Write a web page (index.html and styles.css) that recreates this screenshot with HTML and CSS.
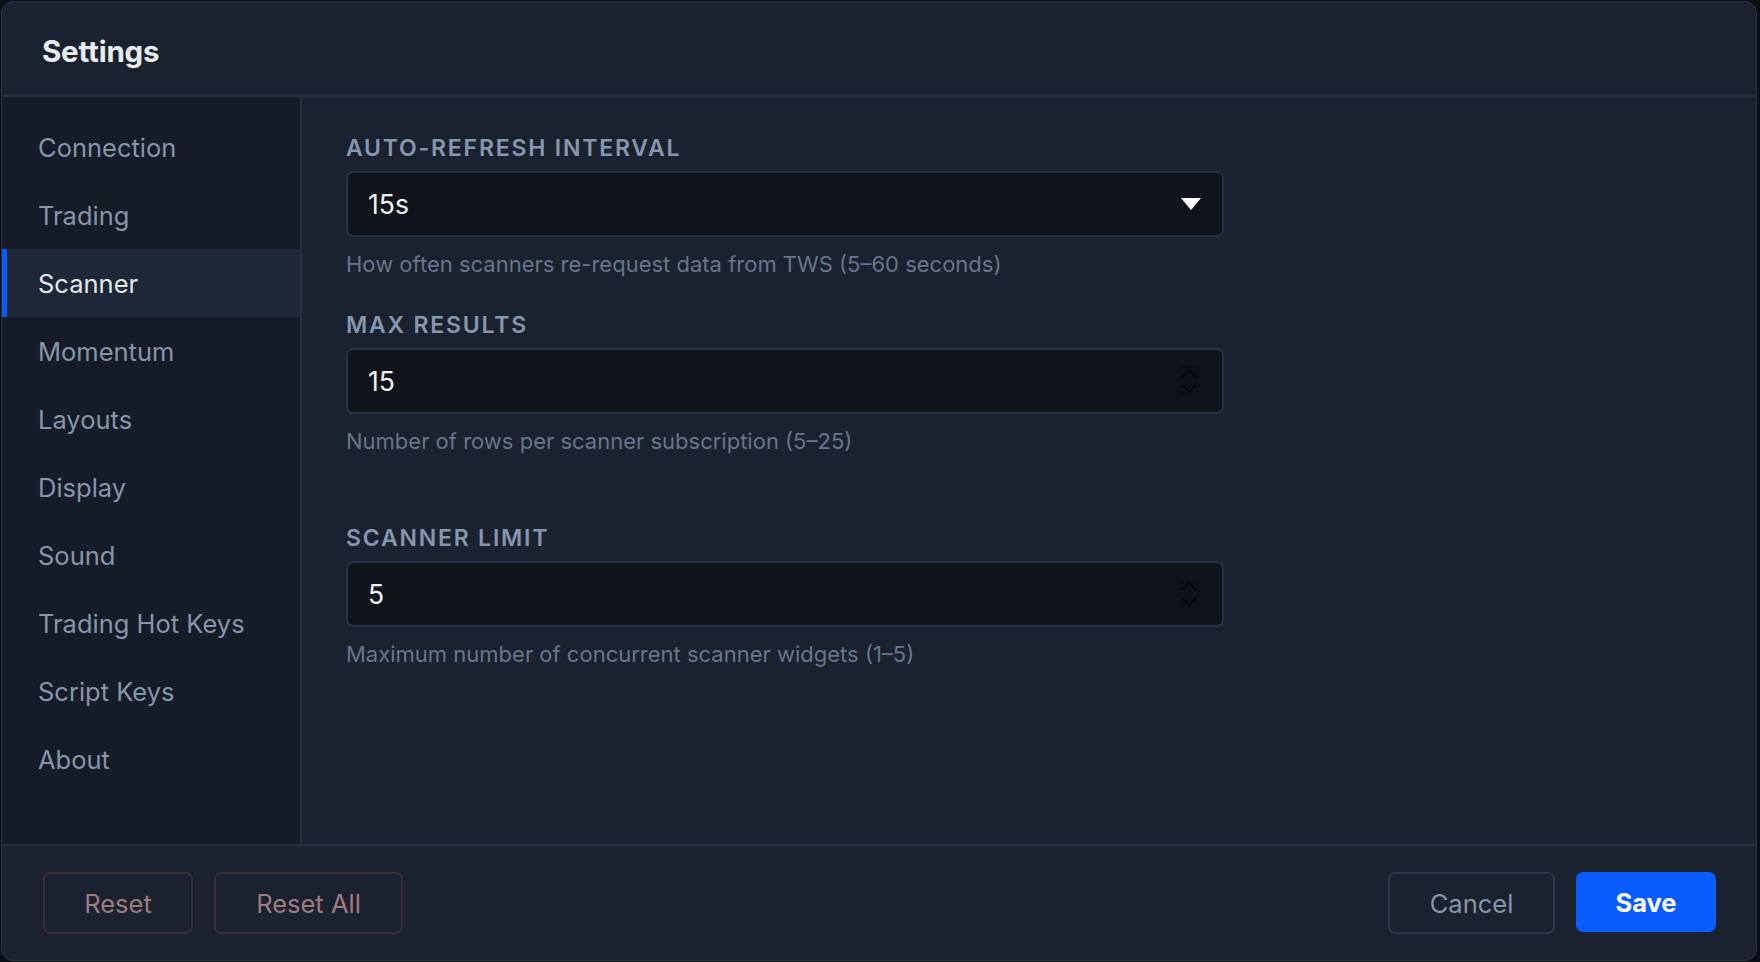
FILE: index.html
```html
<!DOCTYPE html>
<html lang="en">
<head>
  <meta charset="UTF-8">
  <title>Settings</title>
  <link rel="stylesheet" href="styles.css">
</head>
<body>

  <div class="dialog">

    <!-- header -->
    <div class="dialog-header">
      <h1>Settings</h1>
    </div>

    <div class="dialog-body">

      <!-- sidebar -->
      <nav class="sidebar">
        <div class="nav-item">Connection</div>
        <div class="nav-item">Trading</div>
        <div class="nav-item active">Scanner</div>
        <div class="nav-item">Momentum</div>
        <div class="nav-item">Layouts</div>
        <div class="nav-item">Display</div>
        <div class="nav-item">Sound</div>
        <div class="nav-item">Trading Hot Keys</div>
        <div class="nav-item">Script Keys</div>
        <div class="nav-item">About</div>
      </nav>

      <!-- scanner settings -->
      <div class="content">

        <div class="field">
          <div class="field-label">Auto-Refresh Interval</div>
          <div class="field-box">
            <span class="field-value">15s</span>
            <svg class="caret" width="20" height="12" viewBox="0 0 20 12">
              <polygon points="0,0 20,0 10,12" fill="#ffffff"/>
            </svg>
          </div>
          <div class="field-help">How often scanners re-request data from TWS (5–60 seconds)</div>
        </div>

        <div class="field">
          <div class="field-label">Max Results</div>
          <div class="field-box">
            <span class="field-value">15</span>
            <span class="spinner">
              <svg width="16" height="26" viewBox="0 0 16 26">
                <polyline points="1,9 8,2 15,9" fill="none" stroke="#04070a" stroke-width="2"/>
                <polyline points="1,17 8,24 15,17" fill="none" stroke="#04070a" stroke-width="2"/>
              </svg>
            </span>
          </div>
          <div class="field-help">Number of rows per scanner subscription (5–25)</div>
        </div>

        <div class="field spaced">
          <div class="field-label">Scanner Limit</div>
          <div class="field-box">
            <span class="field-value">5</span>
            <span class="spinner">
              <svg width="16" height="26" viewBox="0 0 16 26">
                <polyline points="1,9 8,2 15,9" fill="none" stroke="#04070a" stroke-width="2"/>
                <polyline points="1,17 8,24 15,17" fill="none" stroke="#04070a" stroke-width="2"/>
              </svg>
            </span>
          </div>
          <div class="field-help">Maximum number of concurrent scanner widgets (1–5)</div>
        </div>

      </div>
    </div>

    <!-- footer buttons -->
    <div class="dialog-footer">
      <div class="btn-group">
        <button class="btn btn-danger reset">Reset</button>
        <button class="btn btn-danger reset-all">Reset All</button>
      </div>
      <div class="btn-group">
        <button class="btn btn-cancel">Cancel</button>
        <button class="btn btn-save">Save</button>
      </div>
    </div>

  </div>

</body>
</html>
```

FILE: styles.css
```css
html, body {
  margin: 0;
  height: 100%;
}

body {
  font-family: 'Inter', 'Liberation Sans', sans-serif;
  background-color: #0b0e13;
  color: #e6e9ee;
  padding: 1px 3px 3px 1px;
  box-sizing: border-box;
}

.dialog {
  height: 100%;
  display: flex;
  flex-direction: column;
  background: #19222e;
  border: 1px solid #283444;
  border-radius: 12px;
  overflow: hidden;
}

.dialog-header {
  height: 95px;
  box-sizing: border-box;
  display: flex;
  align-items: center;
  padding: 4px 0 0 40px;
  border-bottom: 2px solid #253141;
}

.dialog-header h1 {
  margin: 0;
  font-size: 29.5px;
  font-weight: 700;
  letter-spacing: -0.2px;
  color: #e9ecf0;
}

.dialog-body {
  flex: 1;
  display: flex;
  min-height: 0;
}

.sidebar {
  width: 298px;
  background: #151c27;
  border-right: 2px solid #253141;
  padding-top: 16px;
}

.nav-item {
  height: 68px;
  display: flex;
  align-items: center;
  font-size: 25.5px;
  color: #8596ab;
  border-left: 6px solid transparent;
  margin-left: -1px;
  padding-left: 31px;
}

.nav-item.active {
  background: #1c2737;
  border-left-color: #0a5cff;
  color: #e4e7eb;
}

.content {
  flex: 1;
  padding: 37px 44px;
}

.field {
  width: 878px;
  margin-bottom: 34px;
}

.field.spaced {
  margin-top: 70px;
}

.field-label {
  font-size: 23px;
  line-height: 28px;
  font-weight: 600;
  letter-spacing: 1.8px;
  text-transform: uppercase;
  color: #8597af;
  margin-bottom: 9px;
}

.field-box {
  height: 66px;
  box-sizing: border-box;
  display: flex;
  align-items: center;
  justify-content: space-between;
  padding: 0 20px;
  background: #0f141b;
  border: 2px solid #263243;
  border-radius: 7px;
}

.field-value {
  font-size: 26.5px;
  color: #f2f4f7;
}

.caret {
  margin-right: 1px;
}

.spinner {
  display: flex;
  align-items: center;
  padding: 2px;
  background: #0d1117;
  border-radius: 3px;
  margin-right: 3px;
}

.field-help {
  margin-top: 14px;
  font-size: 22px;
  line-height: 26px;
  color: #66768c;
}

.dialog-footer {
  height: 116px;
  box-sizing: border-box;
  border-top: 2px solid #253141;
  display: flex;
  align-items: center;
  justify-content: space-between;
  padding: 0 40px 0 41px;
}

.btn-group {
  display: flex;
  gap: 21px;
}

.btn {
  font-family: 'Inter', 'Liberation Sans', sans-serif;
  font-size: 25.5px;
  height: 62px;
  border-radius: 7px;
  cursor: pointer;
  background: transparent;
}

.btn-danger {
  border: 2px solid #3a2b30;
  color: #9f7b80;
}

.reset {
  width: 150px;
}

.reset-all {
  width: 189px;
}

.btn-cancel {
  width: 167px;
  border: 2px solid #2b3848;
  color: #8496ab;
}

.btn-save {
  width: 140px;
  height: 60px;
  border: none;
  background: #0a5cff;
  color: #ffffff;
  font-weight: 700;
}
```
